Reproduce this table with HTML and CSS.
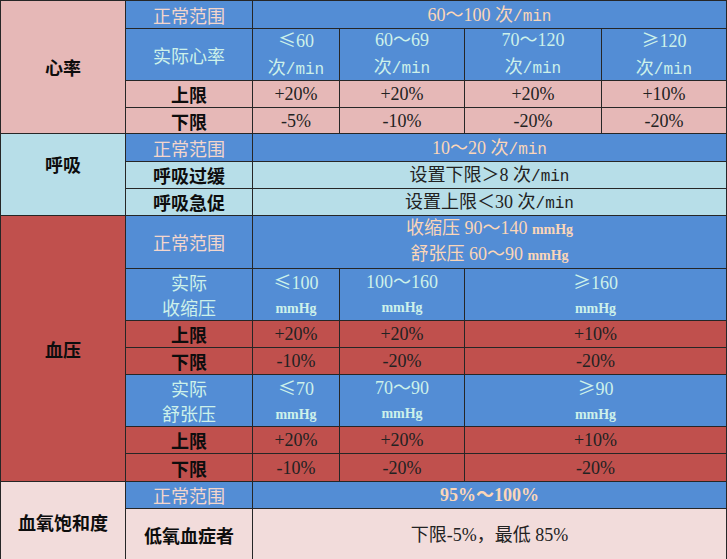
FILE: index.html
```html
<!DOCTYPE html>
<html lang="zh-CN">
<head>
<meta charset="utf-8">
<title>生命体征报警范围</title>
<link rel="stylesheet" href="styles.css">
</head>
<body>
<div class="sheet">
  <!-- 心率 -->
  <div class="cell cat pink r4"><span>心率</span></div>
  <div class="cell blue hdr"><span>正常范围</span></div>
  <div class="cell blue peach c4"><span>60～100 <span class="cjk">次</span><span class="mono">/min</span></span></div>

  <div class="cell blue sub"><span>实际心率</span></div>
  <div class="cell blue cyan two"><span><span class="cjk">≤</span>60</span><span><span class="cjk">次</span><span class="mono">/min</span></span></div>
  <div class="cell blue cyan two"><span>60～69</span><span><span class="cjk">次</span><span class="mono">/min</span></span></div>
  <div class="cell blue cyan two"><span>70～120</span><span><span class="cjk">次</span><span class="mono">/min</span></span></div>
  <div class="cell blue cyan two"><span><span class="cjk">≥</span>120</span><span><span class="cjk">次</span><span class="mono">/min</span></span></div>

  <div class="cell pink lbl"><span>上限</span></div>
  <div class="cell pink val"><span>+20%</span></div>
  <div class="cell pink val"><span>+20%</span></div>
  <div class="cell pink val"><span>+20%</span></div>
  <div class="cell pink val"><span>+10%</span></div>

  <div class="cell pink lbl"><span>下限</span></div>
  <div class="cell pink val"><span>-5%</span></div>
  <div class="cell pink val"><span>-10%</span></div>
  <div class="cell pink val"><span>-20%</span></div>
  <div class="cell pink val"><span>-20%</span></div>

  <!-- 呼吸 -->
  <div class="cell cat cyanbg r3 up"><span>呼吸</span></div>
  <div class="cell blue hdr"><span>正常范围</span></div>
  <div class="cell blue peach c4"><span>10～20 <span class="cjk">次</span><span class="mono">/min</span></span></div>

  <div class="cell cyanbg lbl"><span>呼吸过缓</span></div>
  <div class="cell cyanbg val c4"><span>设置下限＞8 <span class="cjk">次</span><span class="mono">/min</span></span></div>

  <div class="cell cyanbg lbl"><span>呼吸急促</span></div>
  <div class="cell cyanbg val c4"><span>设置上限＜30 <span class="cjk">次</span><span class="mono">/min</span></span></div>

  <!-- 血压 -->
  <div class="cell cat red r7"><span>血压</span></div>
  <div class="cell blue hdr"><span>正常范围</span></div>
  <div class="cell blue peach c4 two"><span>收缩压 90～140 <b class="unit">mmHg</b></span><span>舒张压 60～90 <b class="unit">mmHg</b></span></div>

  <div class="cell blue sub two"><span>实际</span><span>收缩压</span></div>
  <div class="cell blue cyan two"><span><span class="cjk">≤</span>100</span><b class="unit">mmHg</b></div>
  <div class="cell blue cyan two"><span>100～160</span><b class="unit">mmHg</b></div>
  <div class="cell blue cyan two c2"><span><span class="cjk">≥</span>160</span><b class="unit">mmHg</b></div>

  <div class="cell red lbl"><span>上限</span></div>
  <div class="cell red val"><span>+20%</span></div>
  <div class="cell red val"><span>+20%</span></div>
  <div class="cell red val c2"><span>+10%</span></div>

  <div class="cell red lbl"><span>下限</span></div>
  <div class="cell red val"><span>-10%</span></div>
  <div class="cell red val"><span>-20%</span></div>
  <div class="cell red val c2"><span>-20%</span></div>

  <div class="cell blue sub two"><span>实际</span><span>舒张压</span></div>
  <div class="cell blue cyan two"><span><span class="cjk">≤</span>70</span><b class="unit">mmHg</b></div>
  <div class="cell blue cyan two"><span>70～90</span><b class="unit">mmHg</b></div>
  <div class="cell blue cyan two c2"><span><span class="cjk">≥</span>90</span><b class="unit">mmHg</b></div>

  <div class="cell red lbl"><span>上限</span></div>
  <div class="cell red val"><span>+20%</span></div>
  <div class="cell red val"><span>+20%</span></div>
  <div class="cell red val c2"><span>+10%</span></div>

  <div class="cell red lbl"><span>下限</span></div>
  <div class="cell red val"><span>-10%</span></div>
  <div class="cell red val"><span>-20%</span></div>
  <div class="cell red val c2"><span>-20%</span></div>

  <!-- 血氧饱和度 -->
  <div class="cell cat lpink r2"><span>血氧饱和度</span></div>
  <div class="cell blue hdr"><span>正常范围</span></div>
  <div class="cell blue peach c4 bold"><span>95%～100%</span></div>

  <div class="cell lpink lbl"><span>低氧血症者</span></div>
  <div class="cell lpink val c4"><span>下限-5%，最低 85%</span></div>
</div>
</body>
</html>
```
FILE: styles.css
```css
html, body {
  margin: 0;
  padding: 0;
  background: #ffffff;
}

.sheet {
  width: 727px;
  box-sizing: border-box;
  display: grid;
  grid-template-columns: 124px 126px 86px 124px 136px 124px;
  grid-template-rows: 27px 51px 26px 25px 27px 26px 26px 52px 51px 26px 26px 51px 26px 27px 26px 52px;
  gap: 1px;
  padding: 1px 1px 0 1px;
  background: #262626;
  font-family: "Liberation Serif", "Noto Sans CJK SC", serif;
  font-size: 18px;
  color: #1c1c1c;
}

.cell {
  display: flex;
  flex-direction: column;
  align-items: center;
  justify-content: center;
  text-align: center;
  white-space: nowrap;
  line-height: 24px;
}

.cjk {
  font-family: "Noto Sans CJK SC", sans-serif;
}

.mono {
  font-family: "Liberation Mono", monospace;
  font-size: 16px;
}

.unit {
  font-family: "Liberation Serif", serif;
  font-weight: bold;
  font-size: 14px;
}

.bold { font-weight: bold; }

/* spans */
.c4 { grid-column: span 4; }
.c2 { grid-column: span 2; }
.r2 { grid-row: span 2; }
.r3 { grid-row: span 3; }
.r4 { grid-row: span 4; }
.r7 { grid-row: span 7; }

/* backgrounds */
.pink   { background: #e6b8b7; }
.blue   { background: #538dd5; }
.cyanbg { background: #b7dee8; }
.red    { background: #c0504d; }
.lpink  { background: #f2dcdb; }

/* text styles */
.cat {
  font-family: "Noto Sans CJK SC", sans-serif;
  font-weight: bold;
  color: #0d0d0d;
}
.cat.up { padding-bottom: 22px; box-sizing: border-box; }

.lbl {
  font-family: "Noto Sans CJK SC", sans-serif;
  font-weight: bold;
  color: #0d0d0d;
}

.hdr {
  font-family: "Noto Sans CJK SC", sans-serif;
  color: #f3d6cc;
}

.sub {
  font-family: "Noto Sans CJK SC", sans-serif;
  color: #cdf1ea;
}

.peach { color: #fbd6b8; }
.cyan  { color: #cdf1ea; }

.val { color: #222222; }

.two { line-height: 25px; }
```
